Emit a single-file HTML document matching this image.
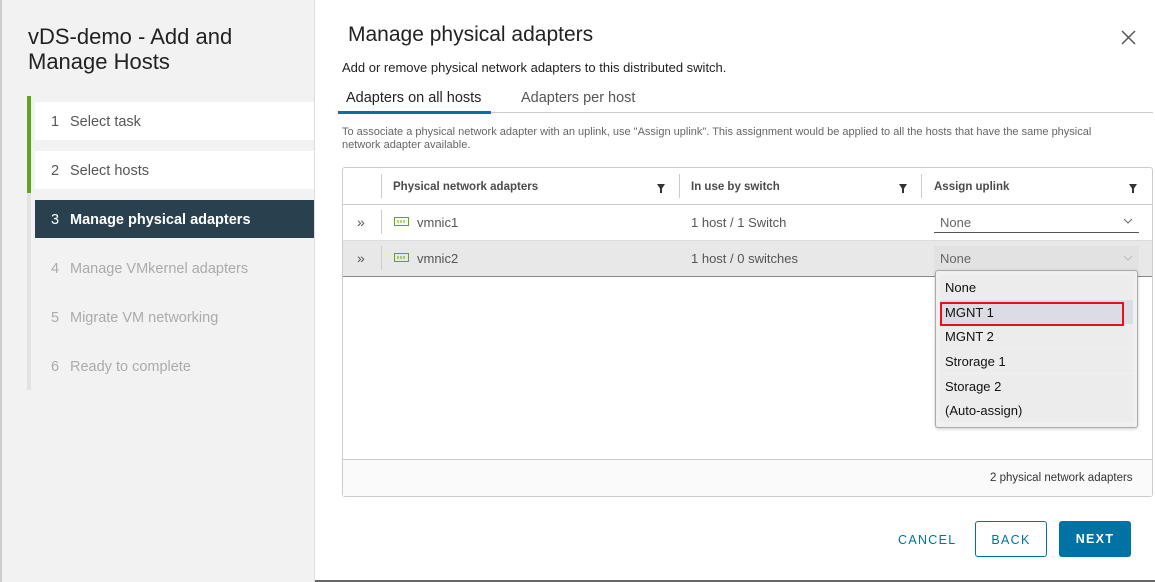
<!DOCTYPE html>
<html><head><style>
*{margin:0;padding:0;box-sizing:border-box}
body{width:1155px;height:582px;overflow:hidden;background:#fff;font-family:"Liberation Sans",sans-serif;position:relative}
.a{position:absolute}
.left{left:0;top:0;width:315px;height:582px;background:#f2f2f2;border-right:1px solid #ddd}
.step{position:absolute;left:35px;width:279px;height:38px;font-size:14.5px;color:#565656;padding:12px 0 0 16px;background:#fff}
.step b{font-weight:normal;display:inline-block;width:19px}
.dis{background:transparent;color:#ababab}
.th{font-size:11.5px;color:#4a4a4a;font-weight:bold;top:180px}
.filt{width:0;height:0;border-left:4px solid transparent;border-right:4px solid transparent;border-top:6px solid #333;top:184px}
.filt:after{content:"";position:absolute;left:-1px;top:-2px;width:2px;height:5px;background:#333}
.sep{width:1px;background:#ccc}
.cell{font-size:13px;color:#555}
.opt{position:absolute;left:940px;width:193px;height:24px;font-size:13px;color:#111;padding:5px 0 0 5px;background:#ececec}
</style></head><body>
<div class="a left"></div>
<div class="a" style="left:0;top:0;width:2px;height:582px;background:#ccc"></div>
<div class="a" style="left:28px;top:24px;font-size:22px;color:#222;line-height:25px">vDS-demo - Add and<br>Manage Hosts</div>
<div class="a" style="left:27px;top:96px;width:4px;height:97px;background:#62a420"></div>
<div class="a" style="left:27px;top:193px;width:4px;height:197px;background:#e3e3e3"></div>
<div class="step" style="top:102px"><b>1</b>Select task</div>
<div class="step" style="top:151px"><b>2</b>Select hosts</div>
<div class="step" style="top:200px;background:#29414e;color:#fff;font-weight:bold"><b>3</b>Manage physical adapters</div>
<div class="step dis" style="top:249px"><b>4</b>Manage VMkernel adapters</div>
<div class="step dis" style="top:298px"><b>5</b>Migrate VM networking</div>
<div class="step dis" style="top:347px"><b>6</b>Ready to complete</div>

<div class="a" style="left:348px;top:23px;font-size:21px;color:#222">Manage physical adapters</div>
<svg class="a" style="left:1121px;top:30px" width="15" height="15"><path d="M1 1L14 14M14 1L1 14" stroke="#555" stroke-width="1.5"/></svg>
<div class="a" style="left:342px;top:60px;font-size:13px;color:#222">Add or remove physical network adapters to this distributed switch.</div>
<div class="a" style="left:346px;top:90px;font-size:14.5px;color:#222">Adapters on all hosts</div>
<div class="a" style="left:521px;top:90px;font-size:14.5px;color:#555">Adapters per host</div>
<div class="a" style="left:338px;top:112px;width:815px;height:1px;background:#ccc"></div>
<div class="a" style="left:338px;top:111px;width:153px;height:3px;background:#0072a3"></div>
<div class="a" style="left:342px;top:126px;font-size:11px;color:#666;line-height:13px;width:785px">To associate a physical network adapter with an uplink, use "Assign uplink". This assignment would be applied to all the hosts that have the same physical network adapter available.</div>

<div class="a" style="left:342px;top:167px;width:811px;height:330px;border:1px solid #ccc;border-radius:3px"></div>
<div class="a" style="left:343px;top:204px;width:809px;height:1px;background:#ccc"></div>
<div class="a" style="left:343px;top:240px;width:809px;height:1px;background:#ddd"></div>
<div class="a" style="left:343px;top:241px;width:809px;height:36px;background:#e8e8e8"></div>
<div class="a" style="left:343px;top:276px;width:809px;height:1px;background:#888"></div>
<div class="a" style="left:343px;top:459px;width:809px;height:37px;background:#fafafa;border-top:1px solid #ccc"></div>
<div class="a" style="left:990px;top:472px;font-size:11.5px;color:#333">2 physical network adapters</div>

<div class="a sep" style="left:381px;top:174px;height:24px"></div>
<div class="a sep" style="left:679px;top:174px;height:24px"></div>
<div class="a sep" style="left:921px;top:174px;height:24px"></div>
<div class="a sep" style="left:381px;top:210px;height:24px"></div>
<div class="a sep" style="left:381px;top:246px;height:24px"></div>
<div class="a th" style="left:393px;top:181px">Physical network adapters</div>
<div class="a th" style="left:691px;top:181px">In use by switch</div>
<div class="a th" style="left:934px;top:181px">Assign uplink</div>
<div class="a filt" style="left:657px"></div>
<div class="a filt" style="left:899px"></div>
<div class="a filt" style="left:1129px"></div>

<div class="a cell" style="left:357px;top:214px;font-size:14px">&#187;</div>
<div class="a cell" style="left:357px;top:250px;font-size:14px">&#187;</div>
<svg class="a" style="left:394px;top:217px" width="15" height="10"><rect x="0.5" y="0.5" width="14" height="8" fill="none" stroke="#62a420"/><path d="M4 3v3M7 3v3M10 3v3" stroke="#62a420"/></svg>
<svg class="a" style="left:394px;top:253px" width="15" height="10"><rect x="0.5" y="0.5" width="14" height="8" fill="none" stroke="#62a420"/><path d="M4 3v3M7 3v3M10 3v3" stroke="#62a420"/></svg>
<div class="a cell" style="left:417px;top:215px">vmnic1</div>
<div class="a cell" style="left:417px;top:251px">vmnic2</div>
<div class="a cell" style="left:691px;top:215px">1 host / 1 Switch</div>
<div class="a cell" style="left:691px;top:251px">1 host / 0 switches</div>
<div class="a cell" style="left:940px;top:215px;color:#666">None</div>
<div class="a" style="left:934px;top:232px;width:205px;height:1px;background:#555"></div>
<svg class="a" style="left:1123px;top:218px" width="10" height="6"><path d="M1 1l4 4 4-4" fill="none" stroke="#666"/></svg>
<div class="a" style="left:934px;top:246px;width:205px;height:24px;background:#e2e2e2"></div>
<div class="a cell" style="left:940px;top:251px;color:#666">None</div>
<svg class="a" style="left:1123px;top:255px" width="10" height="6"><path d="M1 1l4 4 4-4" fill="none" stroke="#bbb"/></svg>

<div class="a" style="left:935px;top:270px;width:203px;height:158px;background:#f0f0f0;border:1px solid #aaa;border-radius:3px;box-shadow:0 1px 3px rgba(0,0,0,.2)"></div>
<div class="opt" style="top:275px">None</div>
<div class="opt" style="top:300px;background:#dcdce4">MGNT 1</div>
<div class="opt" style="top:324px">MGNT 2</div>
<div class="opt" style="top:349px">Strorage 1</div>
<div class="opt" style="top:374px">Storage 2</div>
<div class="opt" style="top:398px">(Auto-assign)</div>
<div class="a" style="left:940px;top:302px;width:184px;height:24px;border:2px solid #e8101a"></div>

<div class="a" style="left:898px;top:533px;font-size:12.5px;letter-spacing:1.3px;color:#0072a3">CANCEL</div>
<div class="a" style="left:975px;top:521px;width:72px;height:36px;border:1px solid #0072a3;border-radius:3px;font-size:12.5px;letter-spacing:1.3px;color:#0072a3;text-align:center;padding-top:11px">BACK</div>
<div class="a" style="left:1059px;top:521px;width:72px;height:36px;background:#0072a3;border-radius:3px;font-size:12.5px;letter-spacing:1.3px;color:#fff;font-weight:bold;text-align:center;padding-top:11px">NEXT</div>
<div class="a" style="left:315px;top:580px;width:840px;height:2px;background:#666"></div>
</body></html>
